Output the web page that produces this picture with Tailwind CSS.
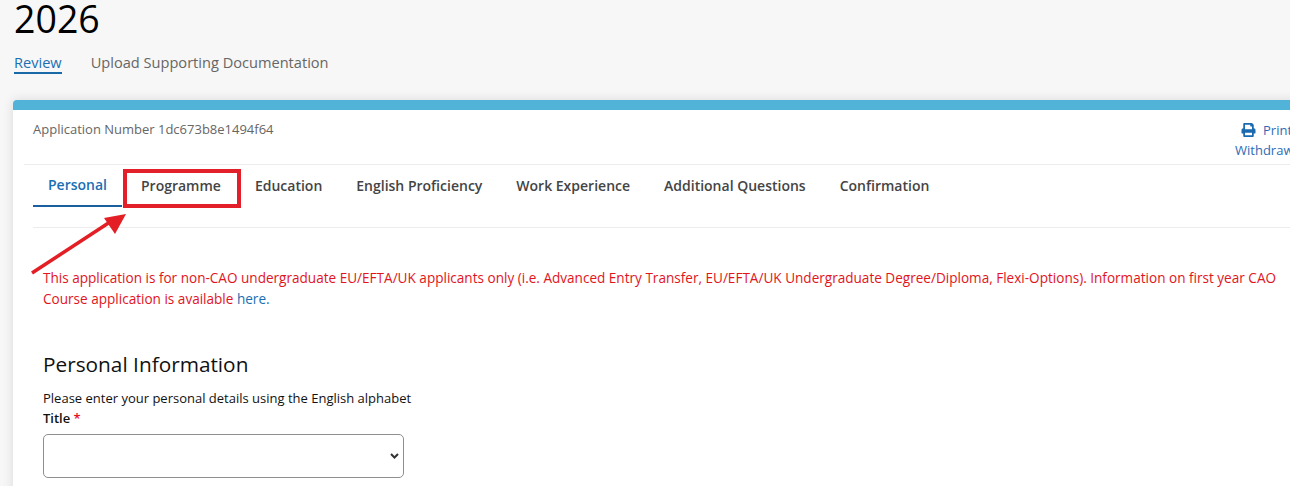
<!DOCTYPE html>
<html lang="en">
<head>
    <meta charset="UTF-8">
    <title>Application Review</title>
    <script src="https://cdn.jsdelivr.net/npm/@tailwindcss/browser@4"></script>
</head>
<body class="relative h-[486px] w-[1290px] overflow-hidden bg-[#f7f7f7] font-['Open_Sans',sans-serif] text-black">
    <h1 class="pl-[14px] text-[37.5px] leading-[38px] text-black">2026</h1>

    <nav class="mt-[14px] flex h-[48px] items-start pl-[14px] text-[14.6px] leading-[20px]">
        <a class="border-b-2 border-[#1a6aa8] text-[#1a6fb3]">Review</a>
        <a class="ml-[29px] text-[#666666]">Upload Supporting Documentation</a>
    </nav>

    <main class="ml-[13px] h-[400px] w-[1300px] rounded-t-[4px] border-t-[10px] border-[#52b3d9] bg-white shadow-[0_0_12px_rgba(0,0,0,0.12)]">
        <header class="ml-[11px] flex h-[55px] justify-between border-b border-[#ececec] pl-[9px]">
            <p class="pt-[10px] text-[13px] leading-[18px] text-[#666666]">Application Number 1dc673b8e1494f64</p>
            <div class="flex w-[78px] flex-col pt-[10px] text-[13px] leading-[20px] text-[#2d6cb5]">
                <a class="flex items-center pl-[6px]">
                    <svg class="mr-[7px] h-[14px] w-[15px]" viewBox="0 0 512 512" fill="#1a6ab0"><path d="M448 192V77.25c0-8.49-3.37-16.62-9.37-22.63L393.37 9.37c-6-6-14.14-9.37-22.63-9.37H96C78.33 0 64 14.33 64 32v160c-35.35 0-64 28.65-64 64v112c0 8.84 7.16 16 16 16h48v96c0 17.67 14.33 32 32 32h320c17.67 0 32-14.33 32-32v-96h48c8.84 0 16-7.16 16-16V256c0-35.35-28.65-64-64-64zm-64 256H128v-96h256v96zm0-224H128V64h192v48c0 8.84 7.16 16 16 16h48v96z"/></svg>
                    Print
                </a>
                <a>Withdraw</a>
            </div>
        </header>

        <div class="ml-[20px] flex h-[63px] items-start border-b border-[#ececec] text-[14px] font-semibold leading-[20px] text-[#444444]">
            <a class="flex h-[42px] w-[89px] justify-center border-b-2 border-[#1a5f9e] pt-[10px] text-[#1a6fb3]">Personal</a>
            <a class="ml-[19px] pt-[11px]">Programme</a>
            <a class="ml-[34px] pt-[11px]">Education</a>
            <a class="ml-[34px] pt-[11px]">English Proficiency</a>
            <a class="ml-[34px] pt-[11px]">Work Experience</a>
            <a class="ml-[34px] pt-[11px]">Additional Questions</a>
            <a class="ml-[34px] pt-[11px]">Confirmation</a>
        </div>

        <section class="pl-[30px]">
            <p class="w-[1240px] pt-[39px] text-[13.57px] leading-[21px] text-[#e2141c]">This application is for non-CAO undergraduate EU/EFTA/UK applicants only (i.e. Advanced Entry Transfer, EU/EFTA/UK Undergraduate Degree/Diploma, Flexi-Options). Information on first year CAO Course application is available <a class="text-[#1a6fb3]">here.</a></p>

            <h2 class="mt-[40px] text-[20.8px] leading-[30px] text-[#111111]">Personal Information</h2>
            <p class="mt-[9px] text-[13px] leading-[20px] text-[#111111]">Please enter your personal details using the English alphabet</p>
            <label class="block text-[13px] font-semibold leading-[20px] text-[#111111]">Title <span class="text-[#e2141c]">*</span></label>
            <div class="mt-[6px] flex h-[44px] w-[361px] items-center justify-end rounded-[5px] border border-[#8f8f8f] bg-white pr-[4px]">
                <svg class="h-[6px] w-[9px]" viewBox="0 0 9 6" fill="none" stroke="#333333" stroke-width="2"><path d="M1 1l3.5 3.5L8 1"/></svg>
            </div>
        </section>
    </main>

    <!-- red annotation drawn over the screenshot -->
    <div class="absolute left-[123px] top-[169px] h-[39px] w-[118px] border-4 border-[#e3202a]"></div>
    <svg class="absolute left-0 top-0 h-[486px] w-[1290px]" viewBox="0 0 1290 486" fill="#e31e24">
        <path d="M32 273L110 222" stroke="#e31e24" stroke-width="3.5"/>
        <path d="M126 214L104 218L115 234Z"/>
    </svg>
</body>
</html>
